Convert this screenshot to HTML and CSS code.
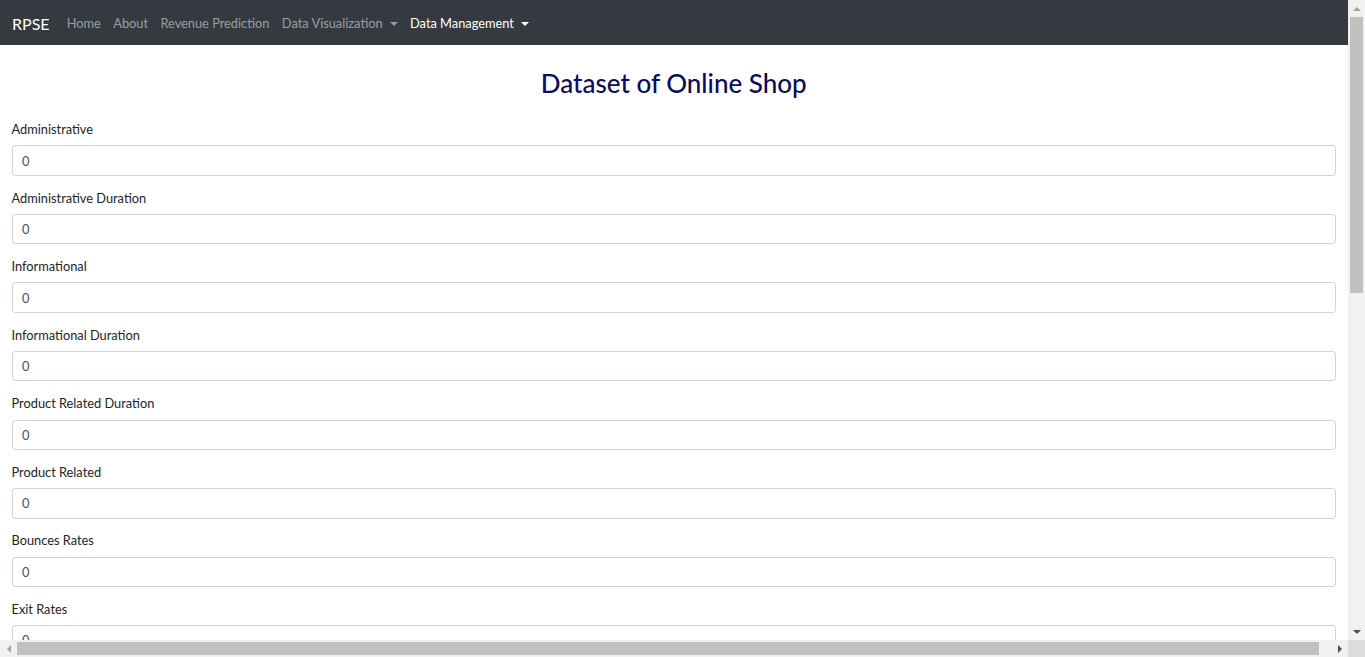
FILE: index.html
```html
<!DOCTYPE html>
<html lang="en">
<head>
<meta charset="utf-8">
<title>Dataset of Online Shop</title>
<link rel="stylesheet" href="styles.css">
</head>
<body>
<div class="window">
  <div class="viewport">
    <nav class="navbar">
      <a class="brand" href="#">RPSE</a>
      <ul class="nav">
        <li><a class="nav-link" href="#">Home</a></li>
        <li><a class="nav-link" href="#">About</a></li>
        <li><a class="nav-link" href="#">Revenue Prediction</a></li>
        <li><a class="nav-link dropdown" href="#">Data Visualization</a></li>
        <li><a class="nav-link dropdown active" href="#">Data Management</a></li>
      </ul>
    </nav>
    <main class="page">
      <h2 class="title">Dataset of Online Shop</h2>
      <form class="fields">
        <div class="form-group"><label>Administrative</label><input class="form-control" type="text" value="0"></div>
        <div class="form-group"><label>Administrative Duration</label><input class="form-control" type="text" value="0"></div>
        <div class="form-group"><label>Informational</label><input class="form-control" type="text" value="0"></div>
        <div class="form-group"><label>Informational Duration</label><input class="form-control" type="text" value="0"></div>
        <div class="form-group"><label>Product Related Duration</label><input class="form-control" type="text" value="0"></div>
        <div class="form-group"><label>Product Related</label><input class="form-control" type="text" value="0"></div>
        <div class="form-group"><label>Bounces Rates</label><input class="form-control" type="text" value="0"></div>
        <div class="form-group"><label>Exit Rates</label><input class="form-control" type="text" value="0"></div>
        <div class="form-group"><label>Page Values</label><input class="form-control" type="text" value="0"></div>
        <div class="form-group"><label>Special Day</label><input class="form-control" type="text" value="0"></div>
      </form>
    </main>
  </div>
  <div class="vscroll">
    <div class="sb-btn"><span class="tri up off"></span></div>
    <div class="vtrack"><div class="vthumb"></div></div>
    <div class="sb-btn"><span class="tri down"></span></div>
  </div>
  <div class="hscroll">
    <div class="sb-btn"><span class="tri left off"></span></div>
    <div class="htrack"><div class="hthumb"></div></div>
    <div class="sb-btn"><span class="tri right"></span></div>
  </div>
  <div class="corner"></div>
</div>
</body>
</html>
```
FILE: styles.css
```css
html, body {
  margin: 0;
  padding: 0;
  height: 100%;
  overflow: hidden;
}
body {
  font-family: "Segoe UI", "Lato", "Open Sans", sans-serif;
  font-size: 12.8px;
  line-height: 1.5;
  color: #212529;
  background: #fff;
}
a { text-decoration: none; }

.window {
  display: grid;
  grid-template-columns: 1fr 17px;
  grid-template-rows: 1fr 17px;
  height: 100vh;
  overflow: hidden;
}
.viewport {
  overflow: hidden;
  min-width: 0;
  min-height: 0;
}

/* navbar */
.navbar {
  display: flex;
  align-items: center;
  height: 45px;
  padding: 3px 12px 0 12px;
  background: #343a40;
  box-sizing: border-box;
}
.brand {
  color: #fff;
  font-size: 16px;
  line-height: 1.5;
  margin-right: 11px;
}
.nav {
  display: flex;
  list-style: none;
  margin: 0;
  padding: 0;
}
.nav-link {
  display: block;
  padding: 6.4px 6.2px;
  color: rgba(255, 255, 255, 0.5);
}
.nav-link.active { color: #fff; }
.dropdown::after {
  content: "";
  display: inline-block;
  margin-left: 7px;
  vertical-align: 2px;
  border-top: 4px solid;
  border-left: 4px solid transparent;
  border-right: 4px solid transparent;
}

/* content */
.page {
  padding: 0 12px 10px 11.5px;
}
.title {
  margin: 23px 0 21px;
  text-align: center;
  font-size: 26px;
  font-weight: 500;
  line-height: 1.2;
  color: #0c0c5c;
}
.fields {
  display: flex;
  flex-direction: column;
}
.form-group {
  margin-bottom: 12.97px;
}
.form-group label {
  display: block;
  margin-bottom: 6px;
}
.form-control {
  display: block;
  width: 100%;
  height: 30.4px;
  box-sizing: border-box;
  padding: 4.8px 9.6px;
  font-family: inherit;
  font-size: 12.8px;
  line-height: 1.5;
  color: #495057;
  background: #fff;
  border: 1px solid #ced4da;
  border-radius: 3.2px;
}

/* scrollbars */
.vscroll, .hscroll {
  display: flex;
  background: #f1f1f1;
}
.vscroll { flex-direction: column; }
.sb-btn {
  flex: 0 0 17px;
  width: 17px;
  height: 17px;
  display: flex;
  align-items: center;
  justify-content: center;
}
.vtrack, .htrack {
  flex: 1;
  display: flex;
}
.vtrack { flex-direction: column; }
.vthumb {
  height: 276px;
  margin: 0 2px;
  background: #c1c1c1;
}
.hthumb {
  width: 1302px;
  margin: 2px 0;
  background: #c1c1c1;
}
.tri {
  width: 0;
  height: 0;
  border-style: solid;
  border-color: transparent;
}
.tri.up { border-width: 0 4px 4px; border-bottom-color: #505050; }
.tri.down { border-width: 4px 4px 0; border-top-color: #505050; }
.tri.left { border-width: 4px 4px 4px 0; border-right-color: #505050; }
.tri.right { border-width: 4px 0 4px 4px; border-left-color: #505050; }
.tri.up.off { border-bottom-color: #a3a3a3; }
.tri.left.off { border-right-color: #a3a3a3; }
.corner { background: #dcdcdc; }
```
